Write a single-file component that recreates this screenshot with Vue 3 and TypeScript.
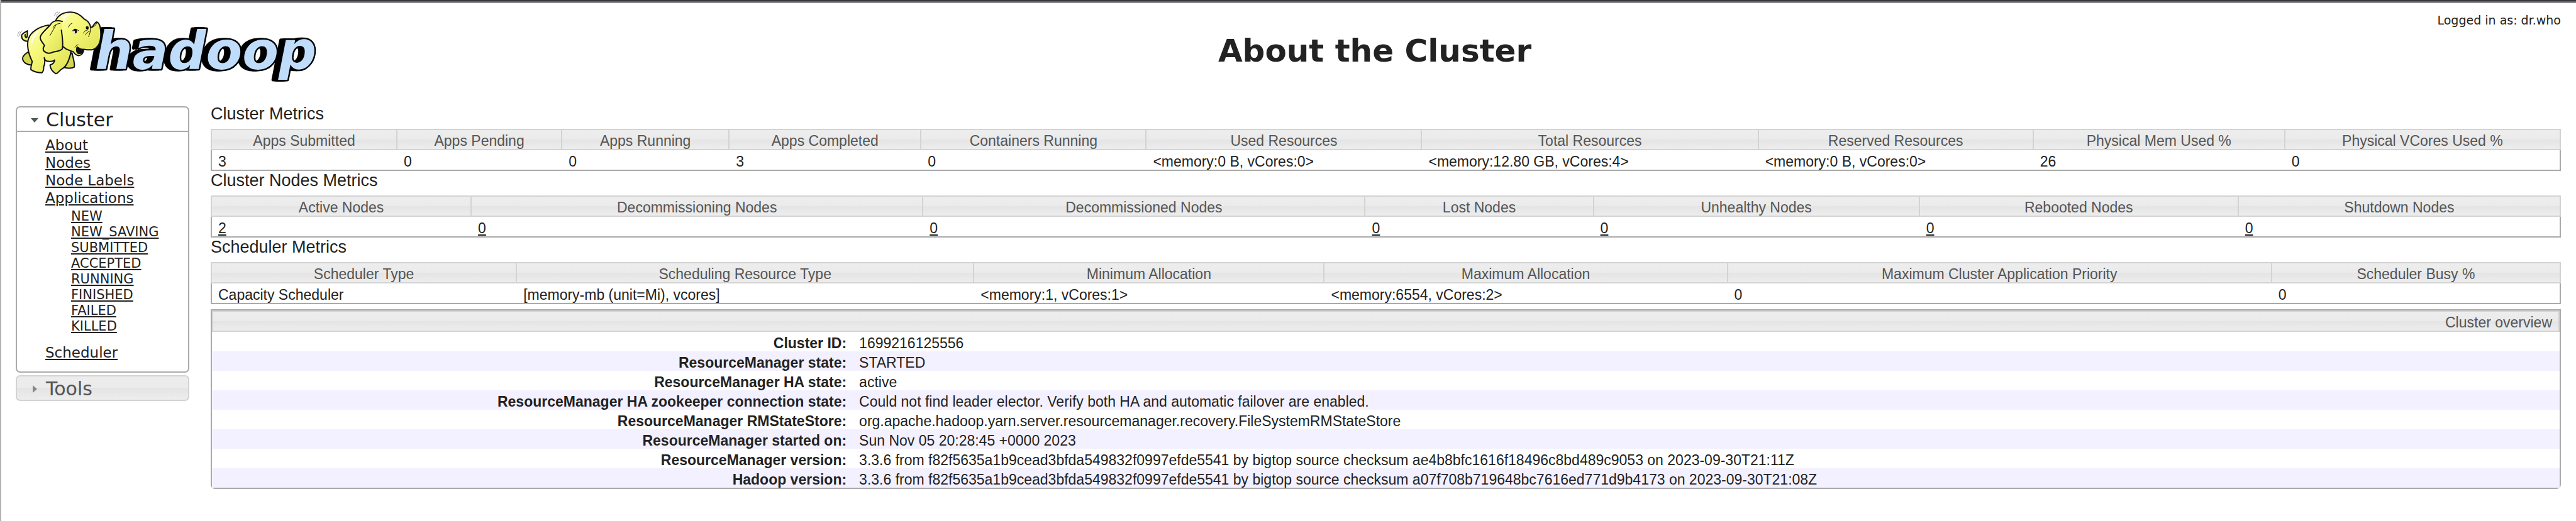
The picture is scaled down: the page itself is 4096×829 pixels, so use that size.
<script setup lang="ts">
import { ref } from 'vue'

interface Column {
  label: string
  value: string
  share: number
}

interface MetricTable {
  title: string
  linked: boolean
  columns: Column[]
}

const clusterOpen = ref(true)
const toolsOpen = ref(false)

const topLinks: string[] = ['About', 'Nodes', 'Node Labels', 'Applications']
const appStates: string[] = [
  'NEW', 'NEW_SAVING', 'SUBMITTED', 'ACCEPTED', 'RUNNING', 'FINISHED', 'FAILED', 'KILLED',
]

const tables: MetricTable[] = [
  {
    title: 'Cluster Metrics',
    linked: false,
    columns: [
      { label: 'Apps Submitted', value: '3', share: 295 },
      { label: 'Apps Pending', value: '0', share: 262 },
      { label: 'Apps Running', value: '0', share: 266 },
      { label: 'Apps Completed', value: '3', share: 305 },
      { label: 'Containers Running', value: '0', share: 358 },
      { label: 'Used Resources', value: '<memory:0 B, vCores:0>', share: 438 },
      { label: 'Total Resources', value: '<memory:12.80 GB, vCores:4>', share: 535 },
      { label: 'Reserved Resources', value: '<memory:0 B, vCores:0>', share: 437 },
      { label: 'Physical Mem Used %', value: '26', share: 400 },
      { label: 'Physical VCores Used %', value: '0', share: 440 },
    ],
  },
  {
    title: 'Cluster Nodes Metrics',
    linked: true,
    columns: [
      { label: 'Active Nodes', value: '2', share: 413 },
      { label: 'Decommissioning Nodes', value: '0', share: 718 },
      { label: 'Decommissioned Nodes', value: '0', share: 703 },
      { label: 'Lost Nodes', value: '0', share: 363 },
      { label: 'Unhealthy Nodes', value: '0', share: 518 },
      { label: 'Rebooted Nodes', value: '0', share: 507 },
      { label: 'Shutdown Nodes', value: '0', share: 514 },
    ],
  },
  {
    title: 'Scheduler Metrics',
    linked: false,
    columns: [
      { label: 'Scheduler Type', value: 'Capacity Scheduler', share: 485 },
      { label: 'Scheduling Resource Type', value: '[memory-mb (unit=Mi), vcores]', share: 727 },
      { label: 'Minimum Allocation', value: '<memory:1, vCores:1>', share: 557 },
      { label: 'Maximum Allocation', value: '<memory:6554, vCores:2>', share: 641 },
      { label: 'Maximum Cluster Application Priority', value: '0', share: 865 },
      { label: 'Scheduler Busy %', value: '0', share: 461 },
    ],
  },
]

const overview: [string, string][] = [
  ['Cluster ID:', '1699216125556'],
  ['ResourceManager state:', 'STARTED'],
  ['ResourceManager HA state:', 'active'],
  ['ResourceManager HA zookeeper connection state:', 'Could not find leader elector. Verify both HA and automatic failover are enabled.'],
  ['ResourceManager RMStateStore:', 'org.apache.hadoop.yarn.server.resourcemanager.recovery.FileSystemRMStateStore'],
  ['ResourceManager started on:', 'Sun Nov 05 20:28:45 +0000 2023'],
  ['ResourceManager version:', '3.3.6 from f82f5635a1b9cead3bfda549832f0997efde5541 by bigtop source checksum ae4b8bfc1616f18496c8bd489c9053 on 2023-09-30T21:11Z'],
  ['Hadoop version:', '3.3.6 from f82f5635a1b9cead3bfda549832f0997efde5541 by bigtop source checksum a07f708b719648bc7616ed771d9b4173 on 2023-09-30T21:08Z'],
]

function widthOf(table: MetricTable, column: Column): string {
  const total = table.columns.reduce((sum, c) => sum + c.share, 0)
  return `${(column.share / total) * 100}%`
}
</script>

<template>
  <div class="page">
    <header class="header">
      <a class="logo" href="#" aria-label="hadoop">
        <svg viewBox="25 10 480 125" width="480" height="125">
          <defs>
            <linearGradient id="skin" x1="0" y1="0" x2="1" y2="1">
              <stop offset="0" stop-color="#fbfcc4" />
              <stop offset="0.35" stop-color="#f7f97c" />
              <stop offset="1" stop-color="#dde050" />
            </linearGradient>
          </defs>
          <text class="wordmark" x="151" y="110">hadoop</text>
          <g class="elephant" transform="scale(0.3367 0.2667)">
            <path class="far" d="M130 312 C115 325 105 338 107 352 C110 374 128 388 150 388 L160 330 Z" />
            <path class="far" d="M340 315 C345 350 354 372 351 400 C340 410 316 408 305 403 L320 340 Z" />
            <path class="skin" d="M133 246 C112 248 101 232 102 212 C104 200 118 192 130 184 C126 196 133 208 127 222 C122 226 116 218 119 206" />
            <path class="skin" d="M228 150 C190 158 146 186 134 232 C126 272 134 320 152 366 C150 386 144 402 146 416 C160 428 180 434 198 434 C206 424 207 412 206 400 C212 382 213 362 209 344 C211 358 217 366 228 366 C242 368 252 368 258 358 C258 372 250 382 236 388 C238 410 250 430 264 440 C276 436 280 420 292 412 C316 396 328 360 336 302 L330 200 Z" />
            <path class="skin" d="M262 124 C276 88 304 72 334 72 C366 72 384 94 398 114 C418 126 426 142 428 164 C442 164 444 134 457 131 C472 138 476 176 476 206 C476 252 466 282 440 295 C424 300 408 296 395 294 C396 312 386 330 372 332 C358 330 350 318 346 308 C332 304 322 298 312 292 L258 240 Z" />
            <path class="dark" d="M364 280 C374 290 384 294 393 295 C392 308 386 320 372 320 C361 314 360 298 364 280 Z" />
            <path class="thin" d="M354 282 C358 270 366 266 370 268 M432 164 C444 162 452 150 458 136" />
            <path class="skin" d="M294 128 C272 118 248 124 238 148 C222 172 192 200 190 222 C188 240 204 258 210 272 C204 282 202 296 208 306 C222 322 240 318 252 310 C272 306 288 302 294 292 C300 262 294 220 290 180" />
            <path class="thin" d="M250 165 C256 150 266 142 284 140 M264 150 C254 172 246 190 236 212" />
            <path class="glow" d="M292 100 C304 88 318 84 334 86 C316 96 306 108 304 126 C300 118 296 112 292 100 Z M146 246 C152 216 166 190 190 178 C172 204 158 232 150 272 Z" />
            <path class="thin" d="M324 162 C326 150 332 142 340 140 M340 186 C350 172 362 172 372 184 M394 198 C398 186 406 180 416 178 M404 208 C408 196 414 190 422 188 M418 218 C424 204 428 186 427 166" />
            <path class="motion" d="M258 92 C260 82 264 76 272 72 M266 98 C268 88 274 80 282 72 M86 218 C82 206 86 194 92 188 M94 212 C92 200 96 190 104 184" />
            <ellipse class="dark" cx="355" cy="186" rx="9" ry="14" />
            <ellipse class="dark" cx="412" cy="166" rx="7" ry="9" />
            <ellipse class="eye" cx="350" cy="191" rx="4" ry="7" />
          </g>
        </svg>
      </a>
      <h1 class="title">About the Cluster</h1>
      <div class="user">Logged in as: dr.who</div>
    </header>

    <div class="columns">
      <nav class="nav">
        <section class="panel">
          <button class="panel-head" type="button" :aria-expanded="clusterOpen" @click="clusterOpen = !clusterOpen">
            <svg class="arrow" viewBox="0 0 14 14" width="14" height="14"><path d="M1 4H13L7 11Z" fill="#555" /></svg>
            Cluster
          </button>
          <div v-if="clusterOpen" class="panel-body">
            <ul class="links">
              <li v-for="link in topLinks" :key="link"><a href="#">{{ link }}</a></li>
            </ul>
            <ul class="states">
              <li v-for="state in appStates" :key="state"><a href="#">{{ state }}</a></li>
            </ul>
            <ul class="links">
              <li><a href="#">Scheduler</a></li>
            </ul>
          </div>
        </section>
        <button class="panel-head closed" type="button" :aria-expanded="toolsOpen" @click="toolsOpen = !toolsOpen">
          <svg class="arrow" viewBox="0 0 14 14" width="14" height="14"><path d="M4 1V13L11 7Z" fill="#888" /></svg>
          Tools
        </button>
      </nav>

      <main class="content">
        <section v-for="table in tables" :key="table.title">
          <h3 class="heading">{{ table.title }}</h3>
          <table class="metrics">
            <colgroup>
              <col v-for="column in table.columns" :key="column.label" :style="{ width: widthOf(table, column) }" />
            </colgroup>
            <thead>
              <tr>
                <th v-for="column in table.columns" :key="column.label" scope="col">{{ column.label }}</th>
              </tr>
            </thead>
            <tbody>
              <tr>
                <td v-for="column in table.columns" :key="column.label">
                  <a v-if="table.linked" href="#">{{ column.value }}</a>
                  <template v-else>{{ column.value }}</template>
                </td>
              </tr>
            </tbody>
          </table>
        </section>

        <table class="overview">
          <thead>
            <tr><th colspan="2" scope="colgroup">Cluster overview</th></tr>
          </thead>
          <tbody>
            <tr v-for="[label, value] in overview" :key="label">
              <th scope="row">{{ label }}</th>
              <td>{{ value }}</td>
            </tr>
          </tbody>
        </table>
      </main>
    </div>
  </div>
</template>

<style>
body {
  margin: 0;
  background: #fff;
}
</style>

<style scoped>
.page {
  box-sizing: border-box;
  min-height: 100vh;
  padding: 0 24px 0 23px;
  border-left: 2px solid #b3b3b3;
  background: linear-gradient(#35363a 2px, #66686a 2px, #66686a 4px, #aaa 4px, #aaa 5px, #fff 5px);
  color: #222;
  font-family: Verdana, "DejaVu Sans", sans-serif;
}

.header {
  display: grid;
  grid-template-columns: 275px 1fr;
  height: 166px;
}

.logo {
  grid-area: 1 / 1;
  padding-top: 10px;
}

.logo svg {
  display: block;
}

.wordmark {
  font: italic bold 84px "DejaVu Sans", sans-serif;
  fill: #bfddfb;
  stroke: #000;
  stroke-width: 5px;
  stroke-linejoin: round;
  paint-order: stroke;
  filter: drop-shadow(-4px 0 0 #000) drop-shadow(-4px 0 0 #000);
}

.elephant path {
  stroke: #111;
  stroke-width: 2px;
  stroke-linejoin: round;
  stroke-linecap: round;
  vector-effect: non-scaling-stroke;
}

.elephant .skin {
  fill: url(#skin);
}

.elephant .far {
  fill: #d3d750;
}

.elephant .dark {
  fill: #111;
}

.elephant .thin,
.elephant .motion {
  fill: none;
  stroke-width: 1px;
}

.elephant .motion {
  stroke: #888;
}

.elephant .glow {
  fill: #fdfee0;
  stroke: none;
}

.elephant .eye {
  fill: #fff;
}

.title {
  grid-area: 1 / 2;
  justify-self: center;
  margin: 51px 0 0;
  font-size: 50px;
  line-height: 60px;
}

.user {
  grid-area: 1 / 2;
  justify-self: end;
  align-self: start;
  padding-top: 21px;
  font-size: 19px;
  line-height: 22px;
}

.columns {
  display: flex;
  align-items: flex-start;
  gap: 34px;
}

.nav {
  flex: 0 0 276px;
  display: flex;
  flex-direction: column;
  gap: 4px;
  padding-top: 3px;
}

.panel {
  border: 2px solid #aaa;
  border-radius: 7px;
}

.panel-head {
  display: flex;
  align-items: center;
  gap: 11px;
  box-sizing: border-box;
  width: 100%;
  margin: 0;
  padding: 2px 0 0 21px;
  border: 0;
  border-bottom: 2px solid #aaa;
  background: none;
  color: #222;
  font: 30px/35px Verdana, "DejaVu Sans", sans-serif;
  text-align: left;
}

.panel-head.closed {
  border: 2px solid #d3d3d3;
  border-radius: 7px;
  background: linear-gradient(#ededed, #ebebeb 50%, #e4e4e4 50%, #ededed);
  color: #555;
}

.arrow {
  flex: none;
}

.panel-body {
  padding: 7px 0 16px 45px;
}

.links,
.states {
  margin: 0;
  padding: 0;
  list-style: none;
}

.links {
  font-size: 23px;
  line-height: 28px;
}

.states {
  margin: 3px 0 15px;
  padding-left: 41px;
  font-size: 21px;
  line-height: 25px;
}

a {
  color: #222;
  text-decoration-thickness: 2px;
  text-underline-offset: 2px;
}

.content {
  flex: 1;
  min-width: 0;
  font-family: Helvetica, "Liberation Sans", Arial, sans-serif;
}

.heading {
  margin: 0 0 8px;
  font-size: 27px;
  font-weight: normal;
  line-height: 31px;
}

.metrics,
.overview {
  width: 100%;
  border-collapse: separate;
  border-spacing: 0;
  font-size: 23px;
  line-height: 26px;
}

.metrics {
  table-layout: fixed;
}

thead th {
  padding: 4px 10px 0;
  border: 2px solid #d3d3d3;
  background: linear-gradient(#ededed, #ebebeb 50%, #e4e4e4 50%, #ededed);
  color: #555;
  font-weight: normal;
}

.metrics thead th:not(:last-child) {
  border-right: 0;
}

td,
tbody th {
  padding: 5px 10px 0;
  text-align: left;
  white-space: nowrap;
}

.metrics td {
  border-bottom: 2px solid #aaa;
}

.metrics td:not(:first-child) {
  padding-left: 12px;
}

.metrics td:first-child {
  border-left: 2px solid #aaa;
}

.metrics td:last-child {
  border-right: 2px solid #aaa;
}

.overview {
  margin-top: 8px;
  border: 2px solid #aaa;
  border-radius: 0 0 7px 7px;
}

.overview thead th {
  text-align: right;
}

.overview tbody th {
  width: 27.3%;
  text-align: right;
}

.overview tbody tr:nth-child(even) {
  background: #f3f1ff;
}
</style>
